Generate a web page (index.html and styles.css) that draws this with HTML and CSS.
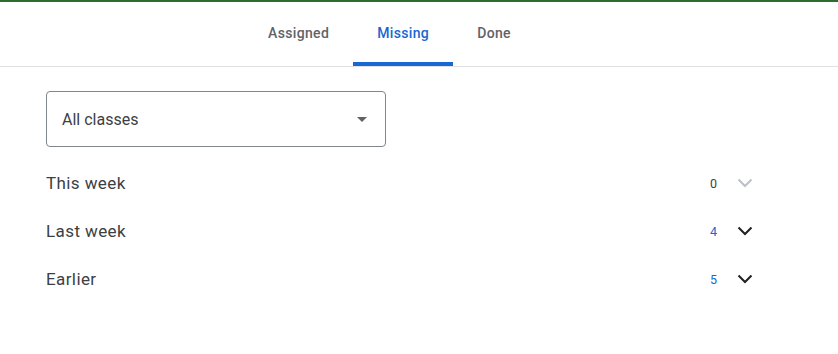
FILE: index.html
```html
<!DOCTYPE html>
<html lang="en">

<head>
  <meta charset="UTF-8">
  <meta name="viewport" content="width=device-width, initial-scale=1">
  <title>To-do</title>
  <link rel="stylesheet" href="styles.css">
</head>

<body>

  <nav class="tabs">
    <a class="tab" href="#">Assigned</a>
    <a class="tab active" href="#">Missing</a>
    <a class="tab" href="#">Done</a>
  </nav>

  <div class="content">
    <div class="select">
      <span>All classes</span>
      <svg class="arrow" width="10" height="5" viewBox="0 0 10 5"><path d="M0 0h10L5 5z" fill="#5f6368"/></svg>
    </div>

    <ul class="groups">
      <li class="group">
        <span class="label">This week</span>
        <span class="count zero">0</span>
        <svg class="chev off" width="24" height="24" viewBox="0 0 24 24"><path d="M5.5 8.5l6.5 6.5 6.5-6.5" fill="none" stroke="currentColor" stroke-width="2"/></svg>
      </li>
      <li class="group">
        <span class="label">Last week</span>
        <span class="count">4</span>
        <svg class="chev" width="24" height="24" viewBox="0 0 24 24"><path d="M5.5 8.5l6.5 6.5 6.5-6.5" fill="none" stroke="currentColor" stroke-width="2"/></svg>
      </li>
      <li class="group">
        <span class="label">Earlier</span>
        <span class="count">5</span>
        <svg class="chev" width="24" height="24" viewBox="0 0 24 24"><path d="M5.5 8.5l6.5 6.5 6.5-6.5" fill="none" stroke="currentColor" stroke-width="2"/></svg>
      </li>
    </ul>
  </div>

</body>

</html>
```

FILE: styles.css
```css
body {
  font-family: Roboto, "Noto Sans", sans-serif;
  background: #fff;
  margin: 0;
  border-top: 2px solid #2e6b30;
}

/* Tabs */
.tabs {
  display: flex;
  height: 64px;
  padding-left: 244px;
  border-bottom: 1px solid #e0e0e0;
}

.tab {
  display: flex;
  align-items: center;
  padding: 2px 24px 0 24px;
  font-size: 14px;
  font-weight: 500;
  letter-spacing: 0.35px;
  color: #5f6368;
  text-decoration: none;
  border-bottom: 4px solid transparent;
  border-radius: 4px 4px 0 0;
}

.tab.active {
  color: #1967d2;
  border-bottom-color: #1967d2;
}

.content {
  padding: 24px 46px;
}

.select {
  box-sizing: border-box;
  width: 340px;
  height: 56px;
  border: 1px solid #80868b;
  border-radius: 4px;
  display: flex;
  align-items: center;
  justify-content: space-between;
  padding: 0 18px 0 15px;
  font-size: 16px;
  color: #3c4043;
}

.groups {
  list-style: none;
  margin: 12px 0 0 0;
  padding: 0;
  width: 711px;
}

.group {
  display: flex;
  align-items: center;
  height: 48px;
  color: #3c4043;
}

.label {
  flex: 1;
  font-size: 17px;
  letter-spacing: 0.4px;
}

.count {
  font-size: 12.5px;
  color: #1967d2;
  margin-right: 16px;
}

.count.zero {
  color: #3c4043;
}

.chev {
  color: #202124;
}

.chev.off {
  color: #bdc1c6;
}
```
